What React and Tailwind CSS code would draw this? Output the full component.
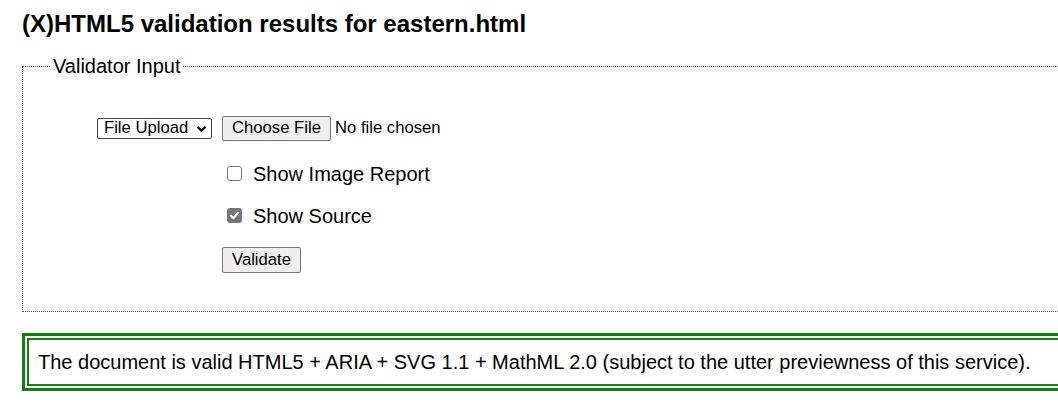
import React from "react";

function Checkbox({ checked }) {
  if (checked) {
    return (
      <span className="ml-[5px] mr-[11px] inline-flex h-[15px] w-[15px] items-center justify-center rounded-[3px] bg-[#767676]">
        <svg width="11" height="11" viewBox="0 0 11 11">
          <path d="M2 5.8 L4.4 8.2 L9 2.8" fill="none" stroke="#fff" strokeWidth="2.2" strokeLinecap="round" strokeLinejoin="round" />
        </svg>
      </span>
    );
  }
  return (
    <span className="ml-[5px] mr-[11px] inline-block h-[15px] w-[15px] rounded-[3px] border border-[#767676] bg-white" />
  );
}

export default function App() {
  return (
    <div className="h-[407px] w-[1058px] overflow-hidden bg-white text-black" style={{ fontFamily: '"Liberation Sans", Arial, sans-serif' }}>
      <div className="pl-[22px]">
        <h2 className="pt-[10px] text-[24px] font-bold leading-[28px]">(X)HTML5 validation results for eastern.html</h2>

        <fieldset className="mt-[17px] h-[257px] w-[1100px] border border-dotted border-[#555] p-0">
          <legend className="ml-[28px] px-[2px] text-[20px] leading-[23px]">Validator Input</legend>

          <div className="mt-[38px] grid grid-cols-[125px_1fr] pl-[74px]">
            <div className="flex h-[25px] items-center">
              <div className="flex h-[21px] w-[115px] items-center justify-between rounded-[2px] border border-[#444] pl-[6px] pr-[4px] text-[16.67px] leading-none">
                <span>File Upload</span>
                <svg width="11" height="8" viewBox="0 0 11 8">
                  <path d="M1.5 1.8 L5.5 5.8 L9.5 1.8" fill="none" stroke="#000" strokeWidth="2" />
                </svg>
              </div>
            </div>
            <div className="flex h-[25px] items-center">
              <div className="flex h-[25px] w-[109px] items-center justify-center rounded-[2px] border border-[#767676] bg-[#efefef] text-[16.67px] leading-none">
                Choose File
              </div>
              <span className="ml-[4px] text-[16.67px] leading-none">No file chosen</span>
            </div>

            <div />
            <div className="mt-[24px] flex h-[17px] items-center text-[20px] leading-none">
              <Checkbox checked={false} />
              <span>Show Image Report</span>
            </div>

            <div />
            <div className="mt-[25px] flex h-[17px] items-center text-[20px] leading-none">
              <Checkbox checked={true} />
              <span>Show Source</span>
            </div>

            <div />
            <div className="mt-[23px] flex">
              <div className="flex h-[26px] w-[79px] items-center justify-center rounded-[2px] border border-[#767676] bg-[#efefef] text-[16.67px] leading-none">
                Validate
              </div>
            </div>
          </div>
        </fieldset>

        <div className="mt-[21px] w-[1100px] border-[3px] border-[#177a17] p-[2px]">
          <div className="flex h-[48px] items-center border-2 border-[#177a17] pl-[9px] text-[20px] leading-none">
            The document is valid HTML5 + ARIA + SVG 1.1 + MathML 2.0 (subject to the utter previewness of this service).
          </div>
        </div>
      </div>
    </div>
  );
}
